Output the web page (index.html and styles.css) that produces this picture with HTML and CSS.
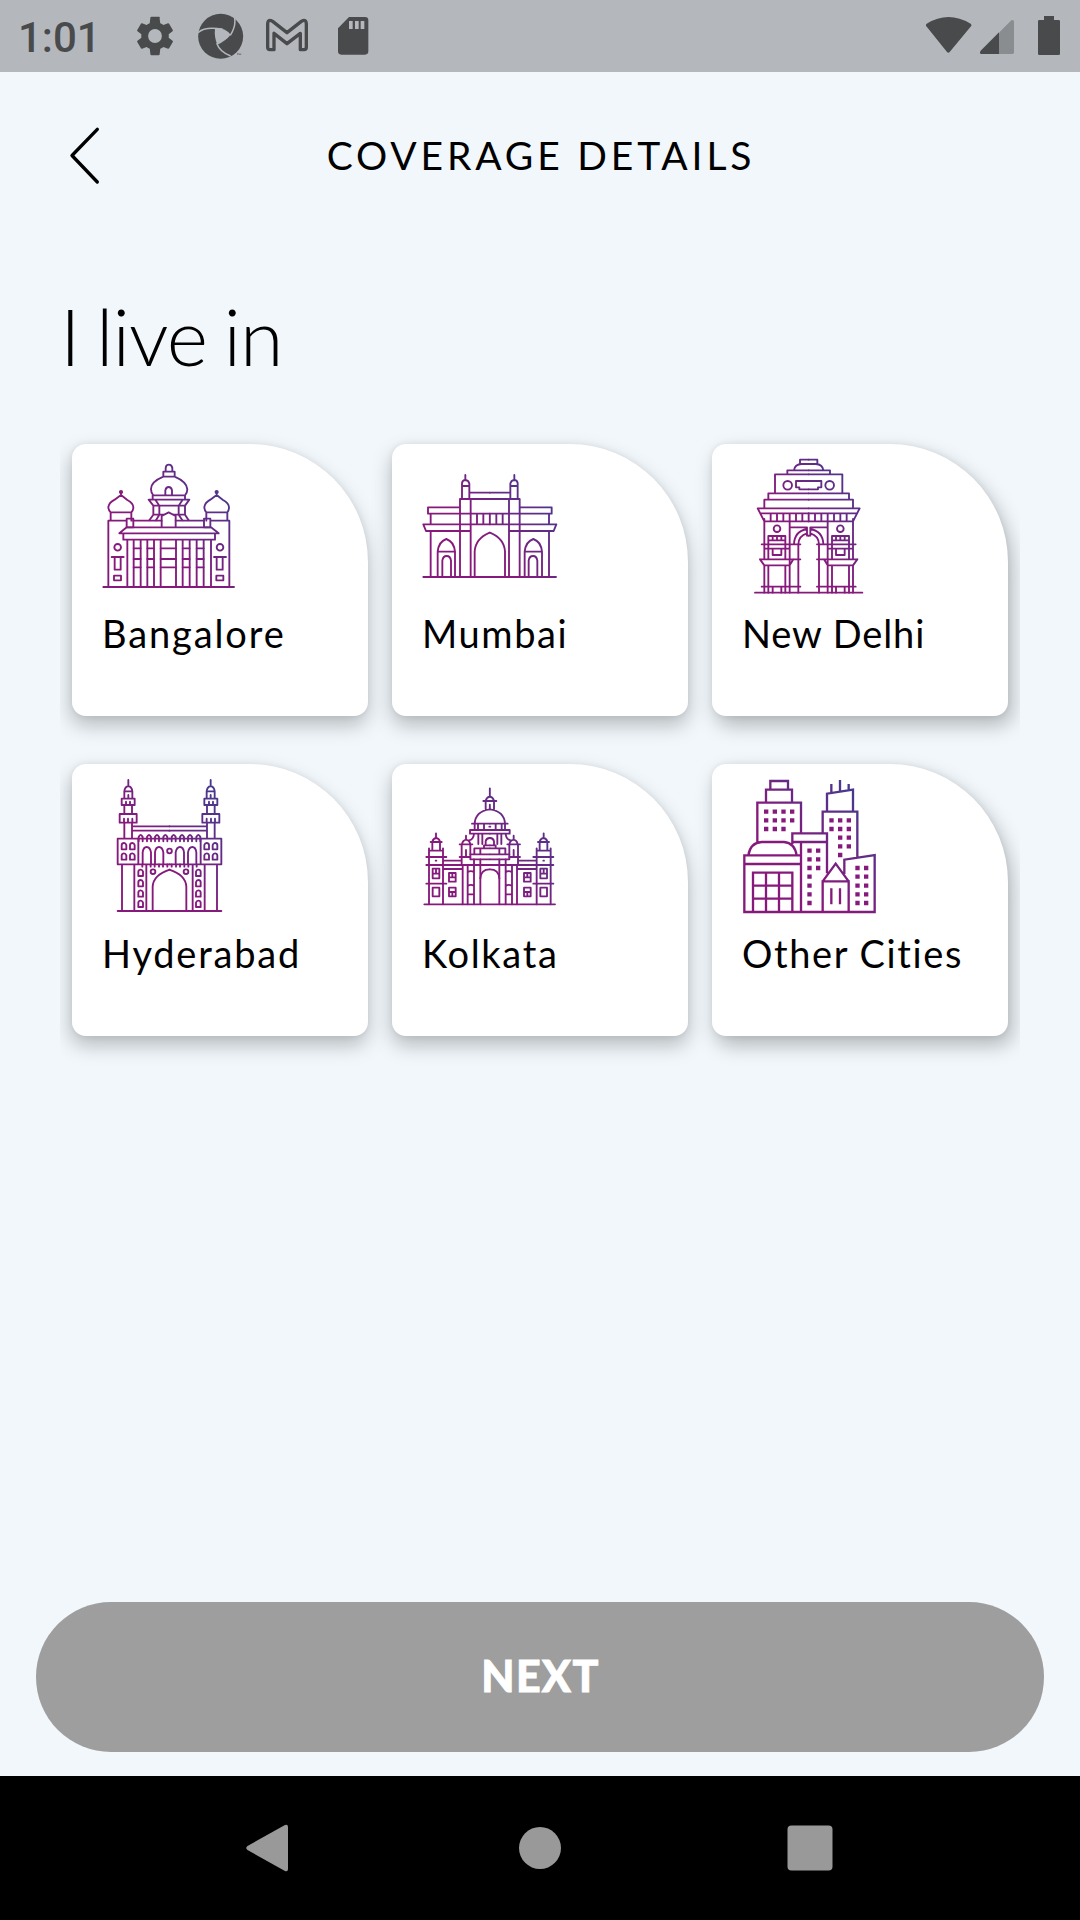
FILE: index.html
```html
<!DOCTYPE html>
<html lang="en">
<head>
<meta charset="utf-8">
<title>Coverage Details</title>
<link rel="stylesheet" href="styles.css">
</head>
<body>
<svg class="defs" aria-hidden="true">
  <defs>
    <linearGradient id="brand" gradientUnits="userSpaceOnUse" x1="190" y1="240" x2="390" y2="60">
      <stop offset="0" stop-color="#861a7c"/><stop offset="1" stop-color="#443b8e"/>
    </linearGradient>
  </defs>
</svg>
<div class="screen">
  <div class="status">
    <span class="clock">1:01</span>
    <div class="notes">
      <svg width="46" height="46" viewBox="0 0 24 24"><path d="M19.14 12.94c.04-.3.06-.61.06-.94s-.02-.64-.07-.94l2.03-1.58a.49.49 0 0 0 .12-.61l-1.92-3.32a.49.49 0 0 0-.59-.22l-2.39.96a7 7 0 0 0-1.62-.94L14.4 2.81A.48.48 0 0 0 13.92 2h-3.84a.47.47 0 0 0-.47.41l-.36 2.94c-.59.24-1.13.57-1.62.94l-2.39-.96a.48.48 0 0 0-.59.22L2.74 8.87a.47.47 0 0 0 .12.61l2.03 1.58a7 7 0 0 0 0 1.88l-2.03 1.58a.49.49 0 0 0-.12.61l1.92 3.32c.12.22.37.29.59.22l2.39-.96c.5.38 1.03.7 1.62.94l.36 2.94c.05.24.24.41.48.41h3.84c.24 0 .44-.17.47-.41l.36-2.94a7 7 0 0 0 1.62-.94l2.39.96c.22.08.47 0 .59-.22l1.92-3.32a.47.47 0 0 0-.12-.61zM12 15.6a3.6 3.6 0 1 1 0-7.2 3.6 3.6 0 0 1 0 7.2z"/></svg>
      <svg width="46" height="46" viewBox="594 39 138 138"><circle cx="662" cy="109" r="67.500"/><path class="hole" d="M645 85Q672 80 692 104Q679 121 652 134Q642 112 645 85Z"/><path class="gap" d="M594 98Q615 78 668 88M702 46Q711 74 691 106M650 130Q660 157 692 168"/><path class="tm" d="M711 161H716M713.500 161V165M718 165V161L720 163L722 161V165"/></svg>
      <svg width="46" height="46" viewBox="792 39 138 138"><path class="line" d="M810 149Q803 149 803 142V73Q803 55 818 64L861 98L904 64Q919 55 919 73V142Q919 149 912 149H901V100L861 131L822 100V149Z"/></svg>
      <svg width="46" height="46" viewBox="990 39 138 138"><path fill-rule="evenodd" d="M1047 51H1095Q1105 51 1105 61V154Q1105 164 1095 164H1024Q1014 164 1014 154V85ZM1047 63V87H1058V63ZM1065 63V87H1076V63ZM1082 63V87H1093V63Z"/></svg>
    </div>
    <div class="system">
      <svg width="48" height="46" viewBox="75 39 144 138"><path d="M80 71Q145 31 212 71Q216 75 213 79L149 156Q145 161 141 156L79 79Q76 75 80 71Z"/></svg>
      <svg width="53" height="46" viewBox="234 39 159 138"><path class="dim" d="M297 98L334 61Q342 57 342 65V157Q342 162 337 162H297Z"/><path d="M297 97V162H244Q237 160 242 152Z"/></svg>
      <svg width="26" height="46" viewBox="408 39 78 138"><path d="M432 48H462V60H476Q480 60 480 64V161Q480 165 476 165H418Q414 165 414 161V64Q414 60 418 60H432Z"/></svg>
    </div>
  </div>

  <header class="bar">
    <svg class="back" width="34" height="60" viewBox="0 0 34 60"><path d="M29.300 3.300L4 29.500L29.300 56"/></svg>
    <h1>COVERAGE DETAILS</h1>
  </header>

  <main>
    <h2>I live in</h2>
    <div class="grid">
      <div class="card">
        <svg class="icon" viewBox="0 0 480 450">
          <mask id="m1" maskUnits="userSpaceOnUse" x="0" y="0" width="480" height="480"><g class="art">
            <path d="M55 411V212H110M110 206H130V232H110ZM62 212V187H124V212M62 187Q55 180 55 171Q57 158 74 149L93 135L112 150Q130 160 130 172Q130 181 124 187M93 135V126"/>
            <circle cx="93" cy="126" r="3.500"/><circle cx="83" cy="292" r="10"/>
            <path d="M65 321H101M74 321V359H92V321M72 377H93V391H72Z"/>
            <path d="M418 411V212H361M342 206H361V232H342ZM349 212V187H412V212M349 187Q343 180 343 171Q345 158 361 149L380 135L399 150Q417 160 417 172Q417 181 412 187M380 135V126M372 321H408M380 321V359H398V321M379 377H400V391H379Z"/>
            <circle cx="380" cy="126" r="3.500"/><circle cx="390" cy="292" r="10"/>
            <path d="M40 411H432M130 212H215M257 212H342M110 232H363L386 250H88ZM100 250H375V269H100ZM112 269V411M131 269V411M152 269V411M172 269V411M192 269V411M212 269V411M258 269V411M278 269V411M299 269V411M320 269V411M341 269V411M363 269V411"/>
            <path d="M131 295H152M131 327H152M131 352H152M172 295H192M172 327H192M172 352H192M212 295H258M212 327H258M212 352H258M278 295H299M278 327H299M278 352H299M320 295H341M320 327H341M320 352H341"/>
            <path d="M220 65H254V80H220ZM227 65V54Q228 44 237 44Q245 44 247 54V65M220 80Q182 96 183 118Q183 129 190 136H285Q292 129 292 118Q291 96 254 80M226 135V121Q228 111 236 111Q244 111 246 121V135M188 136V148M285 136V148M176 149H298L285 167H190ZM196 149L208 167V194L198 211M278 149L266 167V194L277 211M190 167V194L178 211M285 167V194L296 211M190 194H222M250 194H285M215 230V198L236 187L257 198V230"/>
          </g></mask>
          <rect class="paint" width="480" height="480" mask="url(#m1)"/>
        </svg>
        <span class="bangalore">Bangalore</span>
      </div>
      <div class="card">
        <svg class="icon" viewBox="0 0 480 450">
          <mask id="m2" maskUnits="userSpaceOnUse" x="0" y="0" width="480" height="480"><g class="art">
            <g id="h2"><path d="M62 381V243M182 243H48L40 223H239M150 381V147H239M182 381V147M150 172H54V191H239M62 191V223M201 191V223M220 191V223M178 128H239M156 147V99Q158 90 166 90Q176 91 178 101V147M156 108H178M166 90V75M194 381V305Q196 266 239 248M83 381V305Q86 275 109 267Q132 275 135 305V381M83 305H135M97 381V332Q99 318 110 318Q121 318 123 332V381"/></g>
            <use href="#h2" transform="matrix(-1 0 0 1 479 0)"/>
            <path d="M40 381H438M239.500 191V223"/>
          </g></mask>
          <rect class="paint" width="480" height="480" mask="url(#m2)"/>
        </svg>
        <span class="mumbai">Mumbai</span>
      </div>
      <div class="card">
        <svg class="icon" viewBox="0 15 480 450">
          <mask id="m3" maskUnits="userSpaceOnUse" x="0" y="0" width="480" height="480"><g class="art">
            <g id="h3"><path d="M236 44H210V57M236 57H215Q194 58 192 76M236 76H172V88M236 88H135V145M236 145H115V164M236 164H103V190M236 190H83L103 229H236M91 205H236M122 205V229M141 205V229M160 205V229M179 205V229M198 205V229M217 205V229M236 108H198V127H208V133H236M103 222V343M179 229V443M179 247H231V272H236M192 298Q193 259 231 252M205 443V298Q206 272 231 265M95 298H211M115 311V273H166V311M115 286H166M128 273V286M141 273V286M154 273V286M128 311V330H154V311M103 311H179M115 311V343M166 311V343M90 343H211M90 343L103 361H179L190 343M103 361V443M115 361V443M166 361V443M95 425H211M128 425V443M154 425V443"/>
            <circle cx="173" cy="121" r="13"/><circle cx="141" cy="251" r="10"/></g>
            <use href="#h3" transform="matrix(-1 0 0 1 472 0)"/>
            <path d="M75 443H397M236 205V229"/>
          </g></mask>
          <rect class="paint" width="480" height="480" mask="url(#m3)"/>
        </svg>
        <span class="delhi">New Delhi</span>
      </div>
      <div class="card">
        <svg class="icon" viewBox="0 0 480 450">
          <mask id="m4" maskUnits="userSpaceOnUse" x="0" y="0" width="480" height="480"><g class="art">
            <g id="h4"><path d="M96 423V283M133 423V283M169 423V283M83 206H145V283H83ZM145 206H239M145 283H239M103 206V158M126 206V158M89 132H140V158H89ZM102 146V158M114 146V158M127 146V158M103 132V105M126 132V105M95 86H134V105H95ZM108 95V105M120 95V105M103 86V64Q104 51 115 48Q126 51 127 64V86M103 64H127M115 48V30M115 75V86M126 169H239M126 182H239"/>
            <path d="M146 214V201Q152 188 158 201V214M171 214V201Q177 188 183 201V214M195 214V201Q201 188 207 201V214M220 214V201Q226 188 232 201V214M158 283V247Q160 231 170 231Q180 231 183 247V283M195 283V247Q197 231 207 231Q217 231 220 247V283M157 283V290M182 283V290M194 283V290M207 283V290M219 283V290M232 283V290M188 423V350Q190 315 239 299"/>
            <path id="v4" d="M95 238V225Q96 219 102 219Q107 219 109 225V238Z"/><use href="#v4" x="25"/><use href="#v4" y="31"/><use href="#v4" x="25" y="31"/>
            <use href="#v4" x="50" y="80"/><use href="#v4" x="50" y="111"/><use href="#v4" x="50" y="142"/><use href="#v4" x="50" y="173"/>
            <circle cx="189" cy="305" r="7"/></g>
            <use href="#h4" transform="matrix(-1 0 0 1 477 0)"/>
            <circle cx="238.500" cy="243" r="7"/><path d="M83 423H394"/>
          </g></mask>
          <rect class="paint" width="480" height="480" mask="url(#m4)"/>
        </svg>
        <span class="hyderabad">Hyderabad</span>
      </div>
      <div class="card">
        <svg class="icon" viewBox="0 0 480 450">
          <mask id="m5" maskUnits="userSpaceOnUse" x="0" y="0" width="480" height="480"><g class="art">
            <g id="h5"><path d="M57 403V235M99 403V235M49 261H109M49 285H239M49 341H109M57 242H99M67 242V218M90 242V218M62 216H95M67 216Q69 205 78 204Q88 205 90 216M78 204V190M68 296H88V325H68ZM68 311H88M78 296V311M68 353H88V379H68ZM77 272H79M99 272H155M99 297H155M117 309H137V335H117ZM117 322H137M127 309V322M117 353H137V379H117ZM117 366H137M127 366V379M155 285V225M181 253V225M149 223H187M156 223Q158 211 168 209Q179 211 181 223M168 209V197M168 240V260M149 261H181M158 403V285M173 403V285M192 403V268M211 403V268M173 307Q183 300 192 307M173 348Q183 341 192 348M173 373H192"/>
            <path d="M220 93H239M227 118V93Q229 82 239 80M239 118Q196 124 194 161M186 161H239M194 161V180M204 161V180M222 161V180M239 180H180V191H239M205 191V222M217 191V222M192 192Q190 209 177 211M222 235V226H239M227 226V214Q229 204 239 204M239 235H193V253M211 235V253M239 253H181V268H239M211 325Q213 298 239 298"/></g>
            <use href="#h5" transform="matrix(-1 0 0 1 479 0)"/>
            <path d="M43 403H435M239.500 80V55M239.500 104V118M238 170H241"/>
          </g></mask>
          <rect class="paint" width="480" height="480" mask="url(#m5)"/>
        </svg>
        <span class="kolkata">Kolkata</span>
      </div>
      <div class="card">
        <svg class="icon" viewBox="0 0 480 450">
          <mask id="m6" maskUnits="userSpaceOnUse" x="0" y="0" width="480" height="480"><g class="art bold">
            <path d="M43 256H213V426H43ZM43 282H213M55 256Q61 218 95 216H162Q194 219 200 256M69 426V308H187V426M108 308V426M147 308V426M69 347H187M69 386H187M82 220V98H213V190M108 98V59H186V98M121 59V33H174V59M187 222V190H291V310M187 216H291M213 216V256M278 190V125H382V262M291 125V71L369 59V125M304 69V42M330 65V30M356 61V42M343 312V269L434 255V426H213M278 426V334H356V426M278 334L317 281L356 334M304 355V403M330 355V403"/>
          </g></mask>
          <rect class="paint" width="480" height="480" mask="url(#m6)"/>
          <path class="windows" d="M102 125H193M102 151H193M102 177H167M298 151H363M298 177H363M324 203H363M324 229H363M324 255H337M232 242H271M232 268H271M232 294H271M232 320H245M232 347H245M232 373H245M232 399H245M376 294H415M376 320H415M376 347H415M376 373H415M376 399H415"/>
        </svg>
        <span class="other">Other Cities</span>
      </div>
    </div>
  </main>

  <footer><button class="next">NEXT</button></footer>
  <nav>
    <svg width="48" height="56" viewBox="0 0 48 56"><path d="M39 5Q42 4 42 7V49Q42 52 39 51L1.500 30Q-1 28 1.500 26Z"/></svg>
    <svg width="48" height="56" viewBox="0 0 48 56"><circle cx="24" cy="28" r="21"/></svg>
    <svg width="48" height="56" viewBox="0 0 48 56"><rect x="1.500" y="5.500" width="45" height="45" rx="4"/></svg>
  </nav>
</div>
</body>
</html>
```
FILE: styles.css
```css
* { box-sizing: border-box; }
body { margin: 0; }
.defs { position: absolute; width: 0; height: 0; }
.screen {
  width: 1080px; height: 1920px; overflow: hidden;
  display: flex; flex-direction: column;
  background: #f1f7fb; color: #000;
  font-family: Lato, "Liberation Sans", sans-serif;
}
svg { display: block; flex: none; }

.status {
  height: 72px; display: flex; align-items: center;
  padding: 0 18px; background: #b4b8bd; color: #494a4b;
}
.clock { width: 114px; padding-top: 3px; font: 500 42px/72px Roboto, sans-serif; }
.notes { display: flex; gap: 20px; }
.system { display: flex; gap: 5px; margin-left: auto; }
.status svg { fill: #494a4b; }
.status .hole { fill: #b4b8bd; }
.status .gap { fill: none; stroke: #b4b8bd; stroke-width: 4.5; }
.status .tm { fill: none; stroke: #494a4b; stroke-width: 1.5; }
.status .line { fill: none; stroke: #494a4b; stroke-width: 10; stroke-linejoin: round; }
.status .dim { fill: #898d90; }

.bar {
  height: 168px; display: grid; grid-template-columns: 112px 1fr 112px;
  align-items: center;
}
.back { margin-left: 68px; fill: none; stroke: #000; stroke-width: 3.3; stroke-linecap: round; stroke-linejoin: round; }
h1 { margin: 0; padding: 0 0 2px 2px; font-size: 39px; font-weight: 400; line-height: 60px; letter-spacing: 3.85px; text-align: center; white-space: nowrap; }

main { flex: 1; padding: 0 60px; }
h2 { margin: 0; height: 180px; padding-top: 46px; font-size: 79px; font-weight: 300; line-height: 100px; letter-spacing: -1px; word-spacing: -4px; }
.grid {
  display: grid; grid-template-columns: repeat(3, 296px); gap: 48px 24px;
  padding: 24px 12px 40px; overflow: hidden;
}
.card {
  height: 272px; display: flex; flex-direction: column;
  padding: 6px 0 0 18px; background: #fff;
  border-radius: 14px 118px 14px 14px;
  box-shadow: 0 9px 20px rgba(0, 0, 0, .25), 0 0 6px rgba(0, 0, 0, .07);
}
.card:nth-child(3n+1) { box-shadow: -1px 9px 20px rgba(0, 0, 0, .25), 0 0 6px rgba(0, 0, 0, .07); }
.card:nth-child(3n) { box-shadow: 4px 9px 20px rgba(0, 0, 0, .27), 0 0 6px rgba(0, 0, 0, .07); }
.card span { margin: 8px 0 0 12px; font-size: 38px; line-height: 50px; white-space: nowrap; }
.bangalore { letter-spacing: 1.9px; }
.mumbai { letter-spacing: 1.6px; }
.delhi { letter-spacing: .9px; }
.hyderabad { letter-spacing: 1.8px; }
.kolkata { letter-spacing: 1.7px; }
.other { letter-spacing: 1.6px; }
.icon { width: 160px; height: 150px; }
.art { fill: none; stroke: #fff; stroke-width: 5.6; stroke-linejoin: round; stroke-linecap: round; }
.art.bold { stroke-width: 7; stroke-linejoin: miter; stroke-linecap: butt; }
.paint { fill: url(#brand); }
.windows { stroke: #861a7c; stroke-width: 13; stroke-dasharray: 13 13; }

footer { padding: 0 36px 24px; }
.next {
  display: block; width: 100%; height: 150px; padding: 0 0 2px 1px; border: 0; border-radius: 75px;
  background: #9e9e9e; color: #fff;
  font: 900 43px/148px Lato, sans-serif; letter-spacing: 1.3px;
  -webkit-text-stroke: .8px #fff;
}
nav {
  height: 144px; display: flex; justify-content: center; align-items: center;
  gap: 222px; background: #000; fill: #999;
}
```
